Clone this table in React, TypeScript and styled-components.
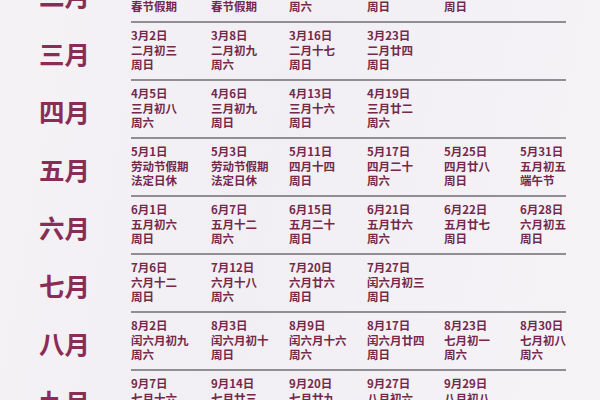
import React from "react";
import styled, { createGlobalStyle } from "styled-components";

const Global = createGlobalStyle`
  html, body {
    margin: 0;
    padding: 0;
    background: #f3f1f4;
    overflow: hidden;
  }
  body {
    font-family: "Noto Sans CJK SC", "Noto Sans", sans-serif;
  }
`;

const Page = styled.div`
  width: 600px;
  height: 400px;
  overflow: hidden;
  background: linear-gradient(100deg, #f4f2f5 0%, #f1eff3 45%, #f5f3f6 100%);
`;

const Table = styled.div`
  display: flex;
  flex-direction: column;
  margin-top: -35px;
`;

const Row = styled.div`
  display: grid;
  grid-template-columns: 131px 435px;
  height: 58px;
`;

const MonthLabel = styled.div`
  display: flex;
  align-items: center;
  justify-content: center;
  padding-right: 2px;
  font-family: "Noto Sans CJK SC", sans-serif;
  font-weight: 700;
  font-size: 25.5px;
  color: #8a2d56;
`;

const Cells = styled.div<{ $last?: boolean }>`
  display: grid;
  grid-template-columns: 80px 78px 78px 77px 76px 46px;
  align-content: start;
  padding-top: 5px;
  box-sizing: border-box;
  border-bottom: ${(p) => (p.$last ? "none" : "2px solid #928d92")};
`;

const Cell = styled.div`
  display: flex;
  flex-direction: column;
  font-family: "Noto Sans CJK SC", sans-serif;
  font-weight: 600;
  font-size: 11.5px;
  line-height: 14.6px;
  color: #74294b;
  white-space: nowrap;
`;

type Entry = [string, string, string];

const data: { month: string; items: Entry[] }[] = [
  {
    month: "二月",
    items: [
      ["2月1日", "正月初四", "春节假期"],
      ["2月2日", "正月初五", "春节假期"],
      ["2月8日", "正月十一", "周六"],
      ["2月9日", "正月十二", "周日"],
      ["2月16日", "正月十九", "周日"],
    ],
  },
  {
    month: "三月",
    items: [
      ["3月2日", "二月初三", "周日"],
      ["3月8日", "二月初九", "周六"],
      ["3月16日", "二月十七", "周日"],
      ["3月23日", "二月廿四", "周日"],
    ],
  },
  {
    month: "四月",
    items: [
      ["4月5日", "三月初八", "周六"],
      ["4月6日", "三月初九", "周日"],
      ["4月13日", "三月十六", "周日"],
      ["4月19日", "三月廿二", "周六"],
    ],
  },
  {
    month: "五月",
    items: [
      ["5月1日", "劳动节假期", "法定日休"],
      ["5月3日", "劳动节假期", "法定日休"],
      ["5月11日", "四月十四", "周日"],
      ["5月17日", "四月二十", "周六"],
      ["5月25日", "四月廿八", "周日"],
      ["5月31日", "五月初五", "端午节"],
    ],
  },
  {
    month: "六月",
    items: [
      ["6月1日", "五月初六", "周日"],
      ["6月7日", "五月十二", "周六"],
      ["6月15日", "五月二十", "周日"],
      ["6月21日", "五月廿六", "周六"],
      ["6月22日", "五月廿七", "周日"],
      ["6月28日", "六月初五", "周日"],
    ],
  },
  {
    month: "七月",
    items: [
      ["7月6日", "六月十二", "周日"],
      ["7月12日", "六月十八", "周六"],
      ["7月20日", "六月廿六", "周日"],
      ["7月27日", "闰六月初三", "周日"],
    ],
  },
  {
    month: "八月",
    items: [
      ["8月2日", "闰六月初九", "周六"],
      ["8月3日", "闰六月初十", "周日"],
      ["8月9日", "闰六月十六", "周六"],
      ["8月17日", "闰六月廿四", "周日"],
      ["8月23日", "七月初一", "周六"],
      ["8月30日", "七月初八", "周六"],
    ],
  },
  {
    month: "九月",
    items: [
      ["9月7日", "七月十六", "周日"],
      ["9月14日", "七月廿三", "周日"],
      ["9月20日", "七月廿九", "周六"],
      ["9月27日", "八月初六", "周六"],
      ["9月29日", "八月初八", "周一"],
    ],
  },
];

export default function App() {
  return (
    <>
      <Global />
      <Page>
        <Table>
          {data.map((row, i) => (
            <Row key={row.month}>
              <MonthLabel>{row.month}</MonthLabel>
              <Cells $last={i === data.length - 1}>
                {row.items.map((it) => (
                  <Cell key={it[0]}>
                    <span>{it[0]}</span>
                    <span>{it[1]}</span>
                    <span>{it[2]}</span>
                  </Cell>
                ))}
              </Cells>
            </Row>
          ))}
        </Table>
      </Page>
    </>
  );
}
